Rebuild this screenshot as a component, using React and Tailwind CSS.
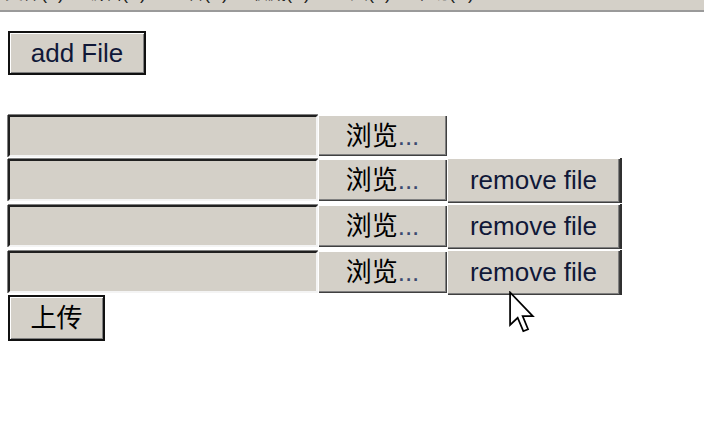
const menus = ["文件(F)", "编辑(E)", "查看(V)", "收藏(A)", "工具(T)", "帮助(H)"];

const raised =
  "bg-[#d4d0c8] shadow-[inset_1px_1px_0_#ffffff,inset_-1px_-1px_0_#404040,inset_-2px_-2px_0_#808080]";

function FileField() {
  return (
    <div className="w-[310px] h-[42px] bg-[#d4d0c8] border-2 border-t-[#202020] border-l-[#202020] border-b-[#f4f4f4] border-r-[#f4f4f4] shadow-[0_-1px_0_#808080,-1px_0_0_#808080]" />
  );
}

function Browse({ h }) {
  return (
    <div className={`w-[129px] ${h} flex items-center justify-center ${raised}`}>
      <span>浏览</span>
      <span className="text-[#3a4a70]">...</span>
    </div>
  );
}

function Remove() {
  return (
    <div
      className={`w-[175px] h-[45px] flex items-center justify-center text-[#101838] ${raised} border-r-2 border-[#303030]`}
    >
      remove file
    </div>
  );
}

export default function App() {
  return (
    <div className="w-[704px] h-[422px] bg-white relative overflow-hidden font-['Liberation_Sans','Noto_Sans_CJK_SC',sans-serif] text-[26px] leading-none text-black">
      {/* menu bar, mostly scrolled off */}
      <div className="h-[10px] bg-[#d4d0c8] overflow-hidden border-b-2 border-[#9a9a9a] box-content">
        <div className="flex gap-[22px] pl-[5px] -mt-[16px] text-[18px] leading-none text-[#222]">
          {menus.map((m) => (
            <span key={m}>{m}</span>
          ))}
        </div>
      </div>

      <div className="px-2 pt-[19px]">
        <div className="w-[138px] h-[44px] border-2 border-[#111] bg-[#d4d0c8] flex items-center justify-center text-[#101838] shadow-[inset_1px_1px_0_#ffffff,inset_-1px_-1px_0_#808080]">
          add File
        </div>

        <div className="mt-[40px] flex flex-col">
          <div className="h-[42px] flex items-start">
            <FileField />
            <Browse h="h-[41px]" />
          </div>
          {[0, 1, 2].map((i) => (
            <div key={i} className="h-[46px] flex items-center">
              <FileField />
              <Browse h="h-[42px]" />
              <Remove />
            </div>
          ))}
        </div>

        <div className="w-[97px] h-[46px] border-2 border-[#111] bg-[#d4d0c8] flex items-center justify-center shadow-[inset_1px_1px_0_#ffffff,inset_-1px_-1px_0_#808080]">
          上传
        </div>
      </div>

      {/* mouse pointer */}
      <svg
        className="absolute left-[509px] top-[291px]"
        width="26"
        height="44"
        viewBox="0 0 12 20"
      >
        <polygon
          points="0.5,0.5 0.5,15.5 4,12.2 6.6,18.4 8.8,17.5 6.3,11.4 11,11.4"
          fill="#fff"
          stroke="#000"
          strokeWidth="0.8"
          strokeLinejoin="miter"
        />
      </svg>
    </div>
  );
}
